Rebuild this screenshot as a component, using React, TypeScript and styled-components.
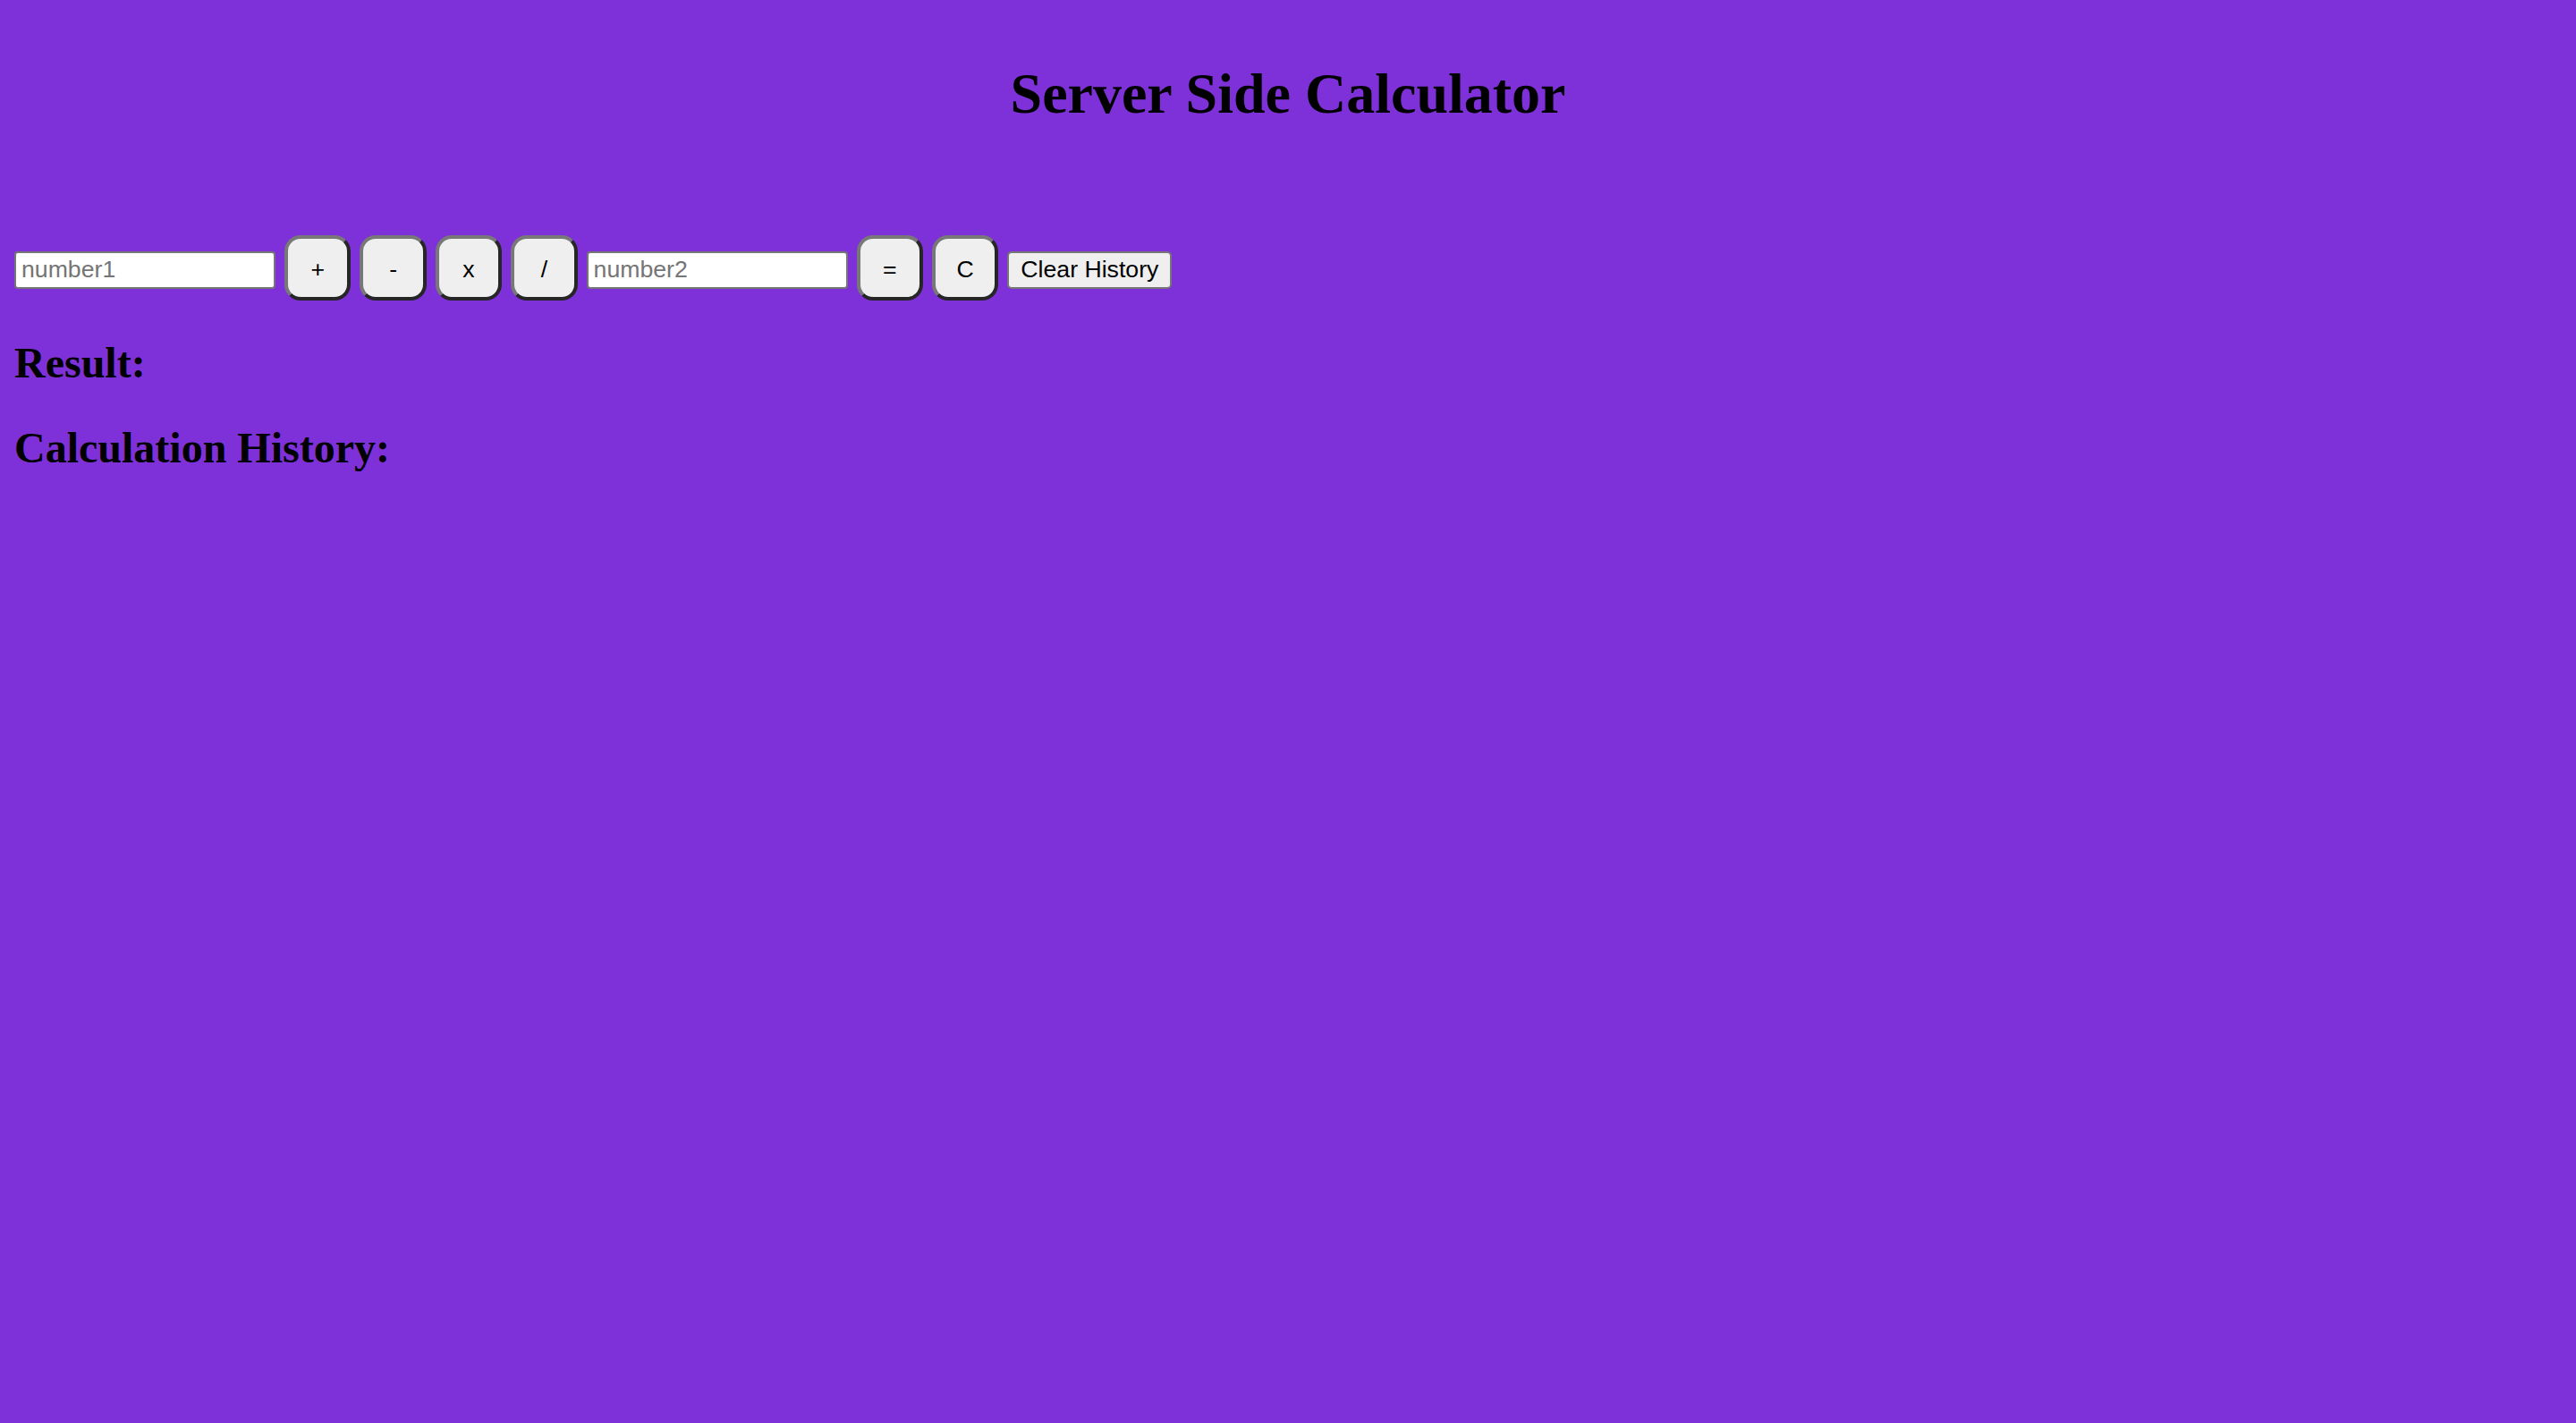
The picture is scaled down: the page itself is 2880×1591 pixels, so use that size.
import { useState } from "react";
import styled, { createGlobalStyle } from "styled-components";

const GlobalStyle = createGlobalStyle`
  html, body {
    margin: 0;
    background-color: #7f31d9;
    font-family: "Liberation Serif", "Times New Roman", serif;
  }
`;

const Page = styled.div`
  padding: 16px;
  min-height: 1559px;
`;

const Title = styled.h1`
  margin: 52px 0 121px;
  font-size: 64px;
  line-height: 74px;
  font-weight: bold;
  text-align: center;
  color: #000;
`;

const Controls = styled.div`
  display: flex;
  align-items: baseline;
  gap: 10px;
`;

const NumberInput = styled.input`
  box-sizing: border-box;
  width: 292px;
  height: 42px;
  padding: 0 6px;
  border: 2px solid #767676;
  border-radius: 4px;
  background: #fff;
  font-family: "Liberation Sans", Arial, sans-serif;
  font-size: 26.67px;
  color: #000;
  outline: none;

  &::placeholder {
    color: #757575;
  }
`;

const OpButton = styled.button`
  box-sizing: border-box;
  width: 74.4px;
  height: 73.4px;
  padding: 4px 0 0;
  border: 4px solid;
  border-color: #787878 #262626 #262626 #787878;
  border-radius: 18px;
  background: #efefef;
  font-family: "Liberation Sans", Arial, sans-serif;
  font-size: 26.67px;
  color: #000;
  cursor: pointer;
`;

const ClearButton = styled.button`
  box-sizing: border-box;
  width: 184px;
  height: 42px;
  padding: 0 12px;
  border: 2px solid #767676;
  border-radius: 5px;
  background: #efefef;
  font-family: "Liberation Sans", Arial, sans-serif;
  font-size: 26.67px;
  color: #000;
  cursor: pointer;
`;

const Heading = styled.h2<{ $first?: boolean }>`
  margin: ${(p) => (p.$first ? "41.6px 0 40px" : "40px 0")};
  font-size: 48px;
  line-height: 55px;
  font-weight: bold;
  color: #000;
`;

const History = styled.ul`
  margin: 0;
  padding-left: 80px;
  font-size: 32px;
  list-style: disc;
`;

type Op = "+" | "-" | "x" | "/";

const compute = (a: number, b: number, op: Op) => {
  if (op === "+") return a + b;
  if (op === "-") return a - b;
  if (op === "x") return a * b;
  return a / b;
};

const App = () => {
  const [first, setFirst] = useState("");
  const [second, setSecond] = useState("");
  const [op, setOp] = useState<Op | null>(null);
  const [result, setResult] = useState<string>("");
  const [history, setHistory] = useState<string[]>([]);

  const handleEquals = () => {
    if (!op || first === "" || second === "") return;
    const value = compute(Number(first), Number(second), op);
    setResult(String(value));
    setHistory([...history, `${first} ${op} ${second} = ${value}`]);
  };

  const handleClear = () => {
    setFirst("");
    setSecond("");
    setOp(null);
  };

  return (
    <Page>
      <GlobalStyle />
      <Title>Server Side Calculator</Title>
      <Controls>
        <NumberInput
          placeholder="number1"
          value={first}
          onChange={(e) => setFirst(e.target.value)}
        />
        {(["+", "-", "x", "/"] as Op[]).map((o) => (
          <OpButton key={o} onClick={() => setOp(o)}>
            {o}
          </OpButton>
        ))}
        <NumberInput
          placeholder="number2"
          value={second}
          onChange={(e) => setSecond(e.target.value)}
        />
        <OpButton onClick={handleEquals}>=</OpButton>
        <OpButton onClick={handleClear}>C</OpButton>
        <ClearButton onClick={() => setHistory([])}>Clear History</ClearButton>
      </Controls>
      <Heading $first>Result: {result}</Heading>
      <Heading>Calculation History:</Heading>
      {history.length > 0 && (
        <History>
          {history.map((h, i) => (
            <li key={i}>{h}</li>
          ))}
        </History>
      )}
    </Page>
  );
};

export default App;
